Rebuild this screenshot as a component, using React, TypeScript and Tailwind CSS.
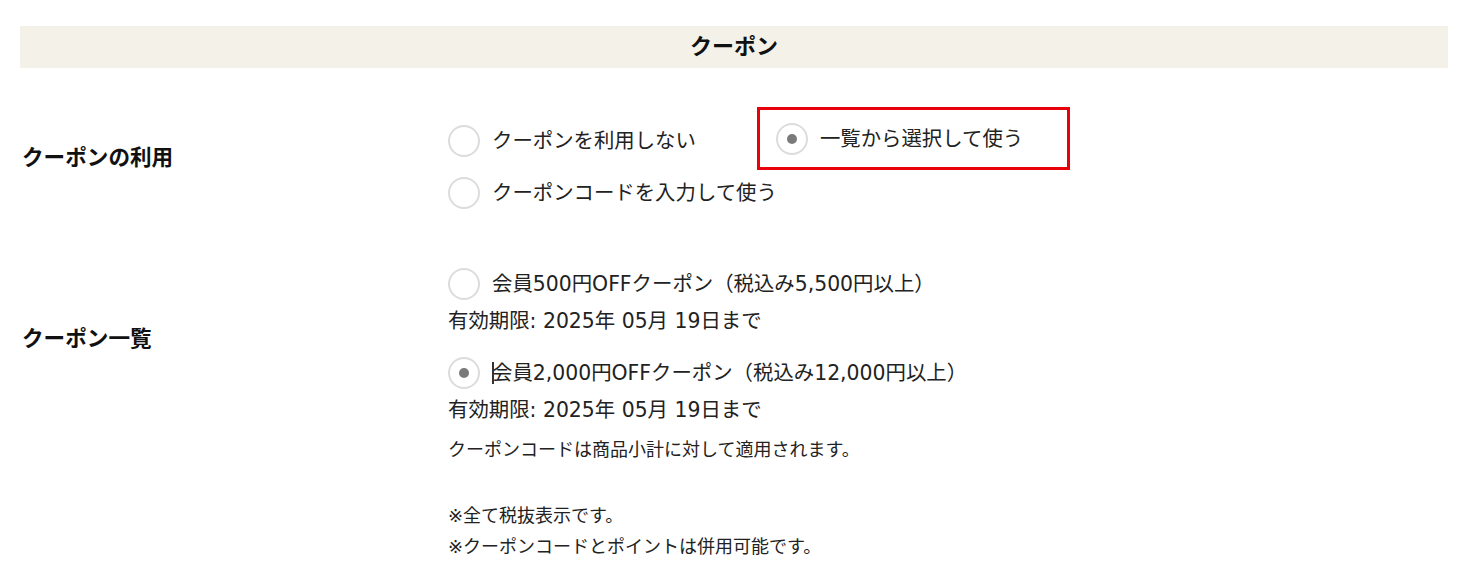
const font = "font-['DejaVu_Sans','Noto_Sans_CJK_JP',sans-serif]";

const Radio = ({ checked }: { checked?: boolean }) => (
  <span className="w-[32px] h-[32px] shrink-0 rounded-full border-2 border-[#dcdcdc] bg-white flex items-center justify-center">
    {checked && <span className="w-[10px] h-[10px] rounded-full bg-[#7a7a7a]" />}
  </span>
);

const Option = ({ label, checked }: { label: string; checked?: boolean }) => (
  <label className="flex items-center gap-3 text-[20.4px] leading-[28px] text-[#222] whitespace-nowrap">
    <Radio checked={checked} />
    <span>{label}</span>
  </label>
);

interface Coupon {
  title: string;
  expires: string;
  checked?: boolean;
}

const coupons: Coupon[] = [
  { title: "会員500円OFFクーポン（税込み5,500円以上）", expires: "有効期限: 2025年 05月 19日まで" },
  { title: "会員2,000円OFFクーポン（税込み12,000円以上）", expires: "有効期限: 2025年 05月 19日まで", checked: true },
];

export default function App() {
  return (
    <div className={`${font} bg-white w-[1471px] h-[586px] overflow-hidden px-[20px] pt-[26px] text-[#222]`}>
      <div className="w-[1428px] h-[42px] bg-[#f4f1e8] flex items-center justify-center">
        <h2 className="text-[22px] font-bold leading-none text-[#111]">クーポン</h2>
      </div>

      {/* クーポンの利用 */}
      <div className="flex items-center mt-[39px]">
        <div className="w-[428px] shrink-0 pl-[2px] text-[21.6px] font-bold text-[#111]">クーポンの利用</div>
        <div className="flex flex-col">
          <div className="flex items-center">
            <div className="pt-[5px]">
              <Option label="クーポンを利用しない" />
            </div>
            <div className="ml-[61px] w-[313px] h-[63px] border-[3px] border-[#e8000b] flex items-center pl-[16px]">
              <Option label="一覧から選択して使う" checked />
            </div>
          </div>
          <div className="mt-[7px]">
            <Option label="クーポンコードを入力して使う" />
          </div>
        </div>
      </div>

      {/* クーポン一覧 */}
      <div className="flex mt-[59px]">
        <div className="w-[428px] shrink-0 pl-[2px] pt-[56px] text-[21.6px] leading-[30px] font-bold text-[#111]">クーポン一覧</div>
        <div className="flex flex-col">
          {coupons.map((c, i) => (
            <div key={i} className={i > 0 ? "mt-[22px]" : ""}>
              <label className="flex items-center text-[20.4px] leading-[28px] whitespace-nowrap">
                <Radio checked={c.checked} />
                <span className="ml-3 relative">
                  {c.checked && <span className="absolute left-0 top-[3px] w-[2px] h-[22px] bg-[#333]" />}
                  {c.title}
                </span>
              </label>
              <p className="mt-[7px] text-[20.4px] leading-[28px]">{c.expires}</p>
            </div>
          ))}
          <p className="mt-[13px] text-[18px] leading-[26px]">クーポンコードは商品小計に対して適用されます。</p>
          <div className="mt-[37px] text-[18px] leading-[31px]">
            <p>※全て税抜表示です。</p>
            <p>※クーポンコードとポイントは併用可能です。</p>
          </div>
        </div>
      </div>
    </div>
  );
}
